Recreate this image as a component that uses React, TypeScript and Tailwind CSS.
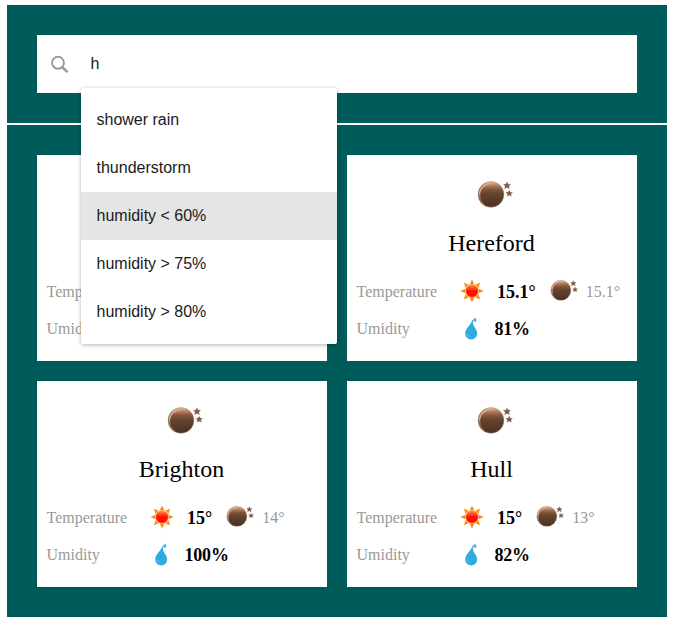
import React from "react";

const serif = "font-['Liberation_Serif',serif]";

function Moon({ className }: { className: string }) {
  const id = React.useId();
  return (
    <svg viewBox="0 0 36 28" className={className}>
      <defs>
        <linearGradient id={id} x1="0" y1="0" x2="0" y2="1">
          <stop offset="0" stopColor="#e9bd9c" />
          <stop offset="0.14" stopColor="#b98263" />
          <stop offset="0.3" stopColor="#85573d" />
          <stop offset="0.48" stopColor="#65432f" />
          <stop offset="1" stopColor="#49301f" />
        </linearGradient>
      </defs>
      <circle cx="14" cy="14.4" r="12.9" fill={`url(#${id})`} stroke="#a08878" strokeWidth="0.5" />
      <path d="M2.6 18C1.4 10 6 3.8 14 3.4" fill="none" stroke="#d9ae92" strokeWidth="1.5" strokeLinecap="round" />
      <path d="M2.4 15c0 4 1.6 7.4 4.6 9.6" fill="none" stroke="#9a6c50" strokeWidth="1.2" strokeLinecap="round" />
      <path d="M30 2.2l1 2.1 2.4.2-1.8 1.6.7 2.4-2.3-1.3-2.3 1.3.7-2.4-1.8-1.6 2.4-.2z" fill="#7c5946" stroke="#7c5946" strokeWidth="0.5" />
      <path d="M32.2 10.4l1 1.9 2.2.2-1.7 1.5.6 2.1-2.1-1.1-2.1 1.1.6-2.1-1.7-1.5 2.2-.2z" fill="#7c5946" stroke="#7c5946" strokeWidth="0.4" />
    </svg>
  );
}

function Sun() {
  const id = React.useId();
  return (
    <svg viewBox="0 0 24 24" className="h-6 w-6 shrink-0">
      <defs>
        <linearGradient id={id} x1="0" y1="0" x2="0" y2="1">
          <stop offset="0" stopColor="#ff8a50" />
          <stop offset="0.35" stopColor="#ff3a14" />
          <stop offset="0.5" stopColor="#ff0d00" />
          <stop offset="1" stopColor="#ff1400" />
        </linearGradient>
      </defs>
      {[0, 45, 90, 135, 180, 225, 270, 315].map((a) => (
        <path key={a} d="M12 .5l2.3 4.8q-2.3-.8-4.6 0z" fill="#fb8c10" transform={`rotate(${a} 12 12)`} />
      ))}
      <circle cx="12" cy="12" r="6.4" fill={`url(#${id})`} stroke="#ffa24a" strokeWidth="0.8" />
    </svg>
  );
}

function Drop() {
  return (
    <svg viewBox="0 0 14 24" className="h-6 w-3.5 shrink-0">
      <path d="M8.6 3.8C7.2 8.8 1.2 12.2 1.2 17.6a6 5.9 0 0 0 12 0C13.2 13.4 8.9 10.6 8.9 6.6c0-1 .2-1.8.6-2.4z" fill="#2fabdf" />
      <path d="M9.4 3c.8-.3 1.3-.9 1.6-1.6.8.9 1.6 1.9 1.4 3-.2 1.7-2.3 1.8-3 .6-.3-.6-.2-1.3 0-2z" fill="#48b5e2" />
      <path d="M3.1 17.6c.3 1.8 1.2 2.8 2.5 3.3" fill="none" stroke="#6fc6e9" strokeWidth=".9" />
    </svg>
  );
}

type City = { name?: string; day?: string; night?: string; humidity?: string };

const cities: City[] = [
  {},
  { name: "Hereford", day: "15.1°", night: "15.1°", humidity: "81%" },
  { name: "Brighton", day: "15°", night: "14°", humidity: "100%" },
  { name: "Hull", day: "15°", night: "13°", humidity: "82%" },
];

function Card({ city }: { city: City }) {
  return (
    <article className="h-[206px] bg-white px-2.5 pt-[25px]">
      <div className="flex h-7 justify-center pl-1.5">{city.name && <Moon className="h-7 w-9" />}</div>
      <h2 className="mt-5 h-[30px] pr-px text-center text-[24px] leading-[30px] text-black">{city.name}</h2>
      <div className="mt-[21px] flex h-6 items-center text-[16px] text-[#999]">
        <span className="-ml-[0.5px] w-[103.5px] shrink-0 pt-0.5">Temperature</span>
        {city.name && (
          <>
            <Sun />
            <b className="ml-[13px] pt-0.5 text-[18px] text-black">{city.day}</b>
            <Moon className="ml-3.5 h-[22px] w-7 shrink-0 -translate-y-px" />
            <span className="ml-2 pt-0.5">{city.night}</span>
          </>
        )}
      </div>
      <div className="mt-[13px] flex h-6 items-center text-[16px] text-[#999]">
        <span className="-ml-[0.5px] w-[107.5px] shrink-0 pt-0.5">Umidity</span>
        {city.name && (
          <>
            <Drop />
            <b className="ml-[16.5px] pt-0.5 text-[18px] tracking-[-0.2px] text-black">{city.humidity}</b>
          </>
        )}
      </div>
    </article>
  );
}

const options = ["shower rain", "thunderstorm", "humidity < 60%", "humidity > 75%", "humidity > 80%"];

export default function App() {
  return (
    <div className={`h-[631px] w-[677px] bg-white pl-[7px] pt-[5px] ${serif}`}>
      <header className="h-[118px] w-[660px] bg-[#005c5a] p-[30px]">
        <div className="relative flex h-[58px] items-center bg-white font-['Liberation_Sans',sans-serif] text-[16px] text-[#1a1a1a]">
          <svg viewBox="0 0 20 20" className="ml-[13px] mt-0.5 h-5 w-5" fill="none" stroke="#999" strokeWidth="1.9">
            <circle cx="8" cy="7.8" r="6" />
            <path d="M12.3 12.1l5.2 5.1" strokeWidth="2.5" />
          </svg>
          <span className="ml-[20.5px]">h</span>
          <ul className="absolute left-11 top-[53px] z-10 h-64 w-64 rounded-[2px] bg-white py-2 shadow-[0_1px_4px_rgba(0,0,0,0.3)]">
            {options.map((o, i) => (
              <li key={o} className={`h-12 pl-[15.5px] leading-[48px] ${i === 2 ? "bg-[#e5e5e5]" : ""}`}>{o}</li>
            ))}
          </ul>
        </div>
      </header>
      <main className="mt-0.5 grid h-[492px] w-[660px] grid-cols-2 content-start gap-5 bg-[#005c5a] p-[30px]">
        {cities.map((c, i) => <Card key={i} city={c} />)}
      </main>
    </div>
  );
}
